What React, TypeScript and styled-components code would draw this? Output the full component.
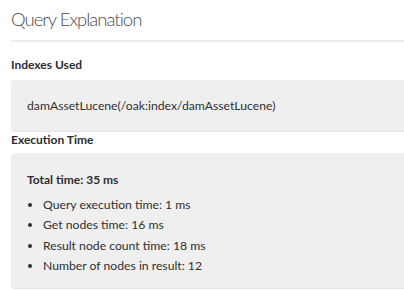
import React from "react";
import styled, { createGlobalStyle } from "styled-components";

const Global = createGlobalStyle`
  html, body { margin: 0; padding: 0; background: #ffffff; }
  body { font-family: "Lato", "Open Sans", sans-serif; color: #2c2c2c; }
`;

const Page = styled.div`
  width: 404px;
  height: 290px;
  overflow: hidden;
  padding-left: 11px;
  box-sizing: border-box;
`;

const Title = styled.h1`
  margin: 0;
  padding-top: 6px;
  height: 42px;
  box-sizing: border-box;
  font-size: 18.5px;
  letter-spacing: -1px;
  line-height: 26px;
  font-weight: 300;
  color: #4b4b4b;
  border-bottom: 2px solid #ebebeb;
`;

const SectionLabel = styled.h2<{ $top: number }>`
  margin: ${(p) => p.$top}px 0 0;
  font-size: 12px;
  line-height: 16px;
  font-weight: 700;
  color: #2c2c2c;
`;

const Panel = styled.div<{ $mt: number; $pb: number }>`
  margin-top: ${(p) => p.$mt}px;
  background: #efefef;
  border-radius: 4px 0 0 4px;
  border-bottom: 1px solid #e6e6e6;
  padding: 16px 16px ${(p) => p.$pb}px;
  font-size: 12.2px;
  line-height: 20px;
  color: #2f2f2f;
`;

const Strong = styled.div`
  font-weight: 700;
  font-size: 12px;
  line-height: 20px;
  margin-top: 1px;
  margin-bottom: 5px;
`;

const List = styled.ul`
  margin: 0;
  padding: 0 0 0 16px;
  list-style: disc;
  li {
    line-height: 20.3px;
  }
  li::marker {
    font-size: 12px;
  }
`;

export default function App() {
  return (
    <>
      <Global />
      <Page>
        <Title>Query Explanation</Title>
        <SectionLabel $top={15}>Indexes Used</SectionLabel>
        <Panel $mt={7} $pb={15}>damAssetLucene(/oak:index/damAssetLucene)</Panel>
        <SectionLabel $top={0}>Execution Time</SectionLabel>
        <Panel $mt={5} $pb={12}>
          <Strong>Total time: 35 ms</Strong>
          <List>
            <li>Query execution time: 1 ms</li>
            <li>Get nodes time: 16 ms</li>
            <li>Result node count time: 18 ms</li>
            <li>Number of nodes in result: 12</li>
          </List>
        </Panel>
      </Page>
    </>
  );
}
